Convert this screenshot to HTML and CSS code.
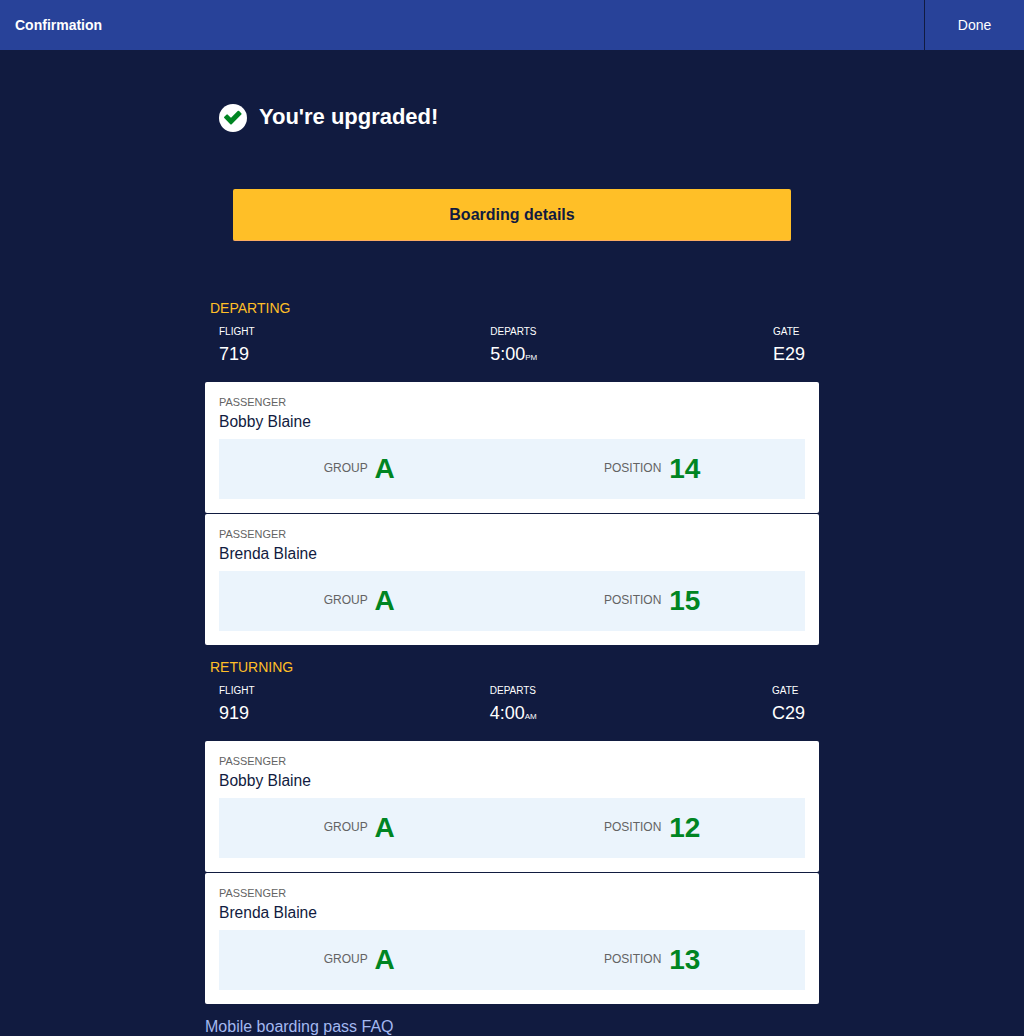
FILE: index.html
```html
<!DOCTYPE html>
<html lang="en">
<head>
<meta charset="utf-8">
<title>Confirmation</title>
<link rel="stylesheet" href="styles.css">
</head>
<body>
<header class="bar"><h1 class="bar-title">Confirmation</h1><a class="bar-done">Done</a></header>
<main class="content">
  <div class="message">
    <svg class="check" viewBox="0 0 28 28"><circle cx="14" cy="14" r="14" fill="#fff"/><path d="M6 13.4 L8.1 11.4 L12 15.2 L19.4 7.8 L21.6 9.9 L12 19.5 Z" fill="#008522" stroke="#008522" stroke-width="2" stroke-linejoin="round"/></svg>
    <h2 class="message-text">You're upgraded!</h2>
  </div>
  <button class="details">Boarding details</button>
  <section class="trip">
    <h3 class="trip-title">DEPARTING</h3>
    <div class="flight">
      <div><div class="label">FLIGHT</div><div class="value">719</div></div>
      <div><div class="label">DEPARTS</div><div class="value">5:00<span class="meridiem">PM</span></div></div>
      <div><div class="label">GATE</div><div class="value">E29</div></div>
    </div>
    <article class="card">
      <div class="card-label">PASSENGER</div><div class="name">Bobby Blaine</div>
      <div class="seat"><div class="cell"><span>GROUP</span><b> A</b></div><div class="cell"><span>POSITION</span><b> 14</b></div></div>
    </article>
    <article class="card">
      <div class="card-label">PASSENGER</div><div class="name">Brenda Blaine</div>
      <div class="seat"><div class="cell"><span>GROUP</span><b> A</b></div><div class="cell"><span>POSITION</span><b> 15</b></div></div>
    </article>
  </section>
  <section class="trip">
    <h3 class="trip-title">RETURNING</h3>
    <div class="flight">
      <div><div class="label">FLIGHT</div><div class="value">919</div></div>
      <div><div class="label">DEPARTS</div><div class="value">4:00<span class="meridiem">AM</span></div></div>
      <div><div class="label">GATE</div><div class="value">C29</div></div>
    </div>
    <article class="card">
      <div class="card-label">PASSENGER</div><div class="name">Bobby Blaine</div>
      <div class="seat"><div class="cell"><span>GROUP</span><b> A</b></div><div class="cell"><span>POSITION</span><b> 12</b></div></div>
    </article>
    <article class="card">
      <div class="card-label">PASSENGER</div><div class="name">Brenda Blaine</div>
      <div class="seat"><div class="cell"><span>GROUP</span><b> A</b></div><div class="cell"><span>POSITION</span><b> 13</b></div></div>
    </article>
  </section>
  <a class="faq">Mobile boarding pass FAQ</a>
</main>
</body>
</html>
```
FILE: styles.css
```css
* { box-sizing: border-box; }
html { height: 100%; overflow: hidden; }
body { margin: 0; height: 100%; overflow: hidden; background: #111b40; color: #fff; font-family: "Liberation Sans", Arial, sans-serif; }
h1, h2, h3 { margin: 0; }
.bar { display: flex; height: 50px; background: #284299; }
.bar-title { flex: 1; padding-left: 15px; font-size: 14px; line-height: 50px; }
.bar-done { width: 100px; border-left: 1px solid #111b40; text-align: center; font-size: 14px; line-height: 50px; }
.content { width: 614px; margin: 0 auto; }
.message { display: flex; align-items: center; gap: 12px; padding: 54px 14px 0; }
.check { width: 28px; height: 28px; }
.message-text { font-size: 22px; line-height: 26px; margin-top: -2px; letter-spacing: -0.02px; }
.details { display: block; width: 558px; height: 52px; margin: 57px auto 58px; padding: 0; border: 0; border-bottom: 1px solid #fbab62; border-radius: 2px; background: #ffbf27; color: #111b40; font: bold 16px/51px "Liberation Sans", Arial, sans-serif; }
.trip-title { padding-left: 5px; height: 27px; font-weight: normal; font-size: 14px; line-height: 18px; color: #ffbf27; }
.flight { display: flex; justify-content: space-between; height: 56px; padding: 0 14px; }
.label { font-size: 10px; line-height: 12px; }
.value { margin-top: 6px; font-size: 18px; line-height: 21px; }
.meridiem { font-size: 8px; }
.card { height: 131px; margin-bottom: 1px; padding: 14px; border-radius: 2px; background: #fff; color: #111b40; }
.card-label { font-size: 10.92px; line-height: 13px; color: #636363; }
.name { margin-top: 4px; font-size: 15.6px; line-height: 18px; }
.seat { display: flex; justify-content: space-around; height: 60px; margin-top: 8px; background: #ebf4fc; }
.cell { display: flex; align-items: center; }
.cell span { font-size: 12px; line-height: 14px; color: #636363; margin-top: -2px; }
.cell b { font-size: 28px; line-height: 32px; color: #008522; white-space: pre; }
.trip + .trip { padding-top: 12px; }
.faq { display: block; margin-top: 14px; font-size: 16px; line-height: 18px; color: #a3b8f0; }
```
